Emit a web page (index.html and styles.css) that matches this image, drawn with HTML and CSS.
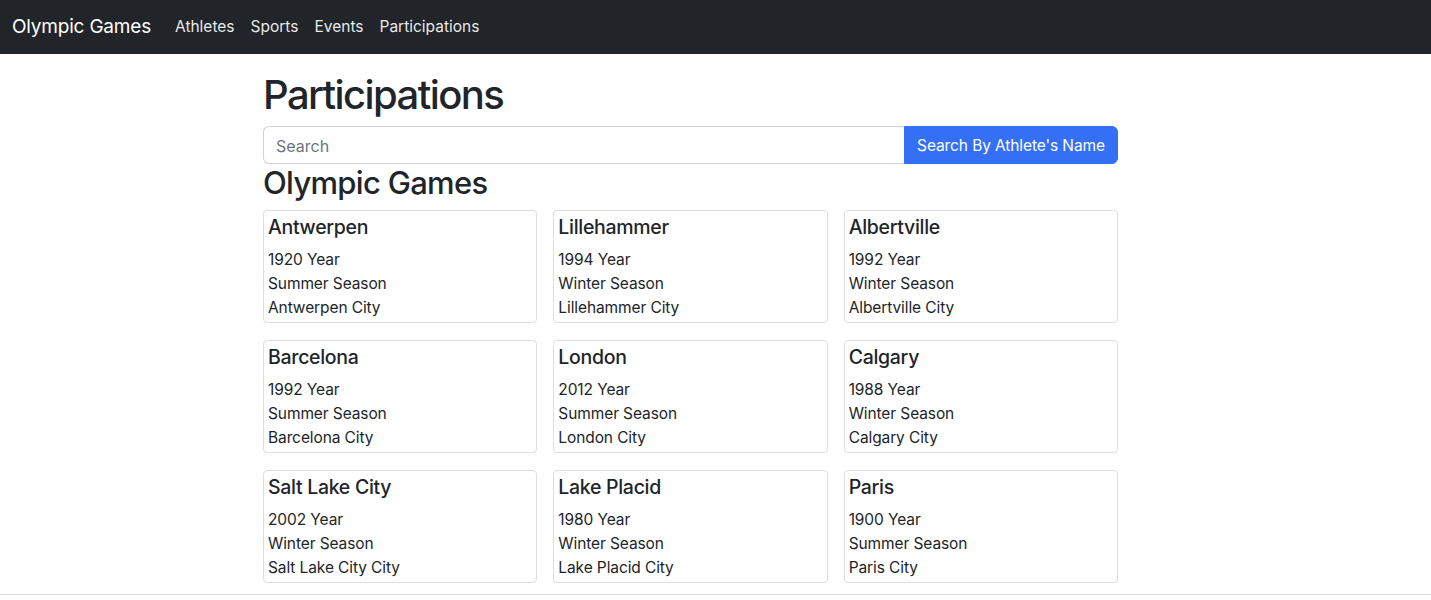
FILE: index.html
```html
<!DOCTYPE html>
<html lang="en">
<head>
<meta charset="utf-8">
<title>Participations</title>
<link rel="stylesheet" href="styles.css">
</head>
<body>
<nav class="navbar">
  <a class="brand" href="#">Olympic Games</a>
  <ul class="nav">
    <li><a href="#">Athletes</a></li>
    <li><a href="#">Sports</a></li>
    <li><a href="#">Events</a></li>
    <li><a href="#">Participations</a></li>
  </ul>
</nav>
<main class="content">
  <h1 class="title">Participations</h1>
  <form class="search">
    <input class="search-input" type="text" placeholder="Search">
    <button class="search-btn" type="button">Search By Athlete's Name</button>
  </form>
  <h2 class="subtitle">Olympic Games</h2>
  <div class="grid">
    <div class="card"><h5>Antwerpen</h5><p>1920 Year</p><p>Summer Season</p><p>Antwerpen City</p></div>
    <div class="card"><h5>Lillehammer</h5><p>1994 Year</p><p>Winter Season</p><p>Lillehammer City</p></div>
    <div class="card"><h5>Albertville</h5><p>1992 Year</p><p>Winter Season</p><p>Albertville City</p></div>
    <div class="card"><h5>Barcelona</h5><p>1992 Year</p><p>Summer Season</p><p>Barcelona City</p></div>
    <div class="card"><h5>London</h5><p>2012 Year</p><p>Summer Season</p><p>London City</p></div>
    <div class="card"><h5>Calgary</h5><p>1988 Year</p><p>Winter Season</p><p>Calgary City</p></div>
    <div class="card"><h5>Salt Lake City</h5><p>2002 Year</p><p>Winter Season</p><p>Salt Lake City City</p></div>
    <div class="card"><h5>Lake Placid</h5><p>1980 Year</p><p>Winter Season</p><p>Lake Placid City</p></div>
    <div class="card"><h5>Paris</h5><p>1900 Year</p><p>Summer Season</p><p>Paris City</p></div>
  </div>
</main>
<footer class="footer"></footer>
</body>
</html>
```
FILE: styles.css
```css
* { box-sizing: border-box; }
html, body { margin: 0; }
body {
  font-family: Inter, "Noto Sans", sans-serif;
  font-size: 16px;
  line-height: 1.5;
  color: #212529;
  background: #fff;
}
.navbar {
  height: 54px;
  background: #212529;
  display: flex;
  align-items: center;
  padding: 0 12px;
}
.brand {
  color: #fff;
  text-decoration: none;
  font-size: 19px;
  margin-right: 16px;
  letter-spacing: -0.2px;
}
.nav {
  list-style: none;
  margin: 0;
  padding: 0;
  display: flex;
}
.nav a {
  display: block;
  color: rgba(255,255,255,0.92);
  text-decoration: none;
  padding: 8px 8px;
  font-size: 15.5px;
}
.content {
  width: 855px;
  margin-left: 263px;
  padding-top: 17px;
}
.title {
  font-size: 40px;
  font-weight: 500;
  line-height: 48px;
  margin: 0 0 7px;
  letter-spacing: -1.6px;
}
.search {
  display: flex;
  height: 38px;
  margin: 0;
}
.search-input {
  flex: 1;
  border: 1px solid #ced4da;
  border-right: none;
  border-radius: 6px 0 0 6px;
  padding: 7px 12px 5px;
  font: inherit;
  font-size: 16px;
  color: #212529;
  outline: none;
}
.search-input::placeholder { color: #6c757d; }
.search-btn {
  width: 214px;
  border: 1px solid #3470f4;
  background: #3470f4;
  color: #fff;
  font: inherit;
  font-size: 15.5px;
  border-radius: 0 6px 6px 0;
  padding: 7px 12px 5px;
  white-space: nowrap;
  letter-spacing: -0.1px;
}
.subtitle {
  font-size: 31px;
  font-weight: 500;
  line-height: 38px;
  margin: 0 0 8px;
  letter-spacing: -0.7px;
}
.grid {
  display: grid;
  grid-template-columns: repeat(3, 1fr);
  column-gap: 16px;
  row-gap: 17px;
}
.card {
  border: 1px solid #dcdfe2;
  border-radius: 4px;
  padding: 4px;
  height: 113px;
}
.card h5 {
  font-size: 19.5px;
  font-weight: 500;
  line-height: 24px;
  margin: 0 0 9px;
  letter-spacing: -0.3px;
}
.card p {
  margin: 0;
  line-height: 24px;
  font-size: 15.5px;
  letter-spacing: -0.1px;
}
.footer {
  margin-top: 11px;
  border-top: 1px solid #dcdcdc;
  height: 10px;
}
```
